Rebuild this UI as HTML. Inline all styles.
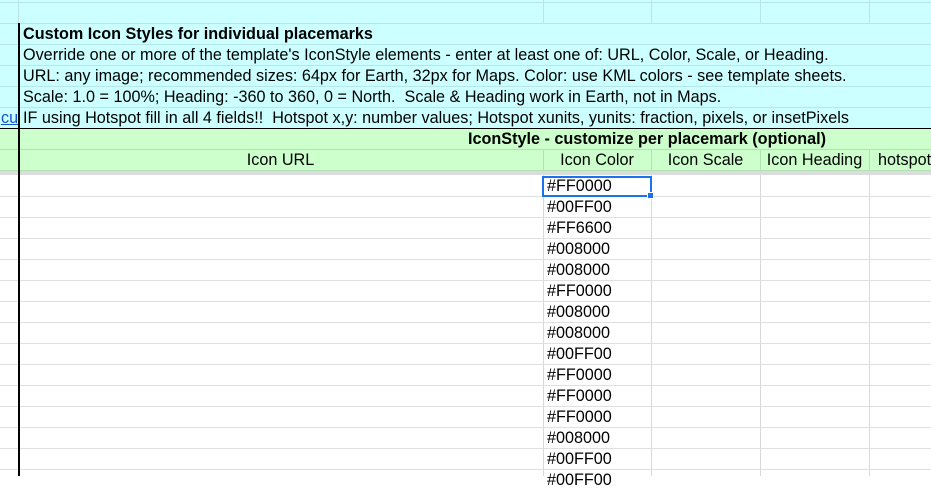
<!DOCTYPE html>
<html><head><style>
*{margin:0;padding:0;box-sizing:border-box}
body{width:931px;height:476px;overflow:hidden;background:#fff;font-family:"Liberation Sans",Arial,sans-serif;font-size:16.2px;color:#000;position:relative}
.a{position:absolute}
.h{position:absolute;left:0;width:931px;height:1px}
.v{position:absolute;width:1px}
.t{position:absolute;white-space:nowrap;line-height:21px}
</style></head><body>
<div class="a" style="left:0;top:0;width:931px;height:171px;background:#ccffff"></div>
<div class="a" style="left:0;top:128px;width:931px;height:43px;background:#ccffcc"></div>
<div class="a" style="left:0;top:171px;width:931px;height:4px;background:#dadce0"></div>
<div class="h" style="top:2px;background:#b8e6e6"></div>
<div class="h" style="top:23px;background:#b8e6e6"></div>
<div class="h" style="top:44px;background:#b8e6e6"></div>
<div class="h" style="top:65px;background:#b8e6e6"></div>
<div class="h" style="top:86px;background:#b8e6e6"></div>
<div class="h" style="top:107px;background:#b8e6e6"></div>
<div class="h" style="top:128px;background:#000"></div>
<div class="h" style="top:149px;background:#b4e0b4"></div>
<div class="h" style="top:170px;background:#b4e0b4"></div>
<div class="v" style="left:18px;top:0;height:23px;background:#b8e6e6"></div>
<div class="v" style="left:543px;top:0;height:23px;background:#b8e6e6"></div>
<div class="v" style="left:651px;top:0;height:23px;background:#b8e6e6"></div>
<div class="v" style="left:760px;top:0;height:23px;background:#b8e6e6"></div>
<div class="v" style="left:869px;top:0;height:23px;background:#b8e6e6"></div>
<div class="v" style="left:543px;top:149px;height:22px;background:#b4e0b4"></div>
<div class="v" style="left:651px;top:149px;height:22px;background:#b4e0b4"></div>
<div class="v" style="left:760px;top:149px;height:22px;background:#b4e0b4"></div>
<div class="v" style="left:869px;top:149px;height:22px;background:#b4e0b4"></div>
<div class="v" style="left:543px;top:175px;height:301px;background:#d9d9d9"></div>
<div class="v" style="left:651px;top:175px;height:301px;background:#d9d9d9"></div>
<div class="v" style="left:760px;top:175px;height:301px;background:#d9d9d9"></div>
<div class="v" style="left:869px;top:175px;height:301px;background:#d9d9d9"></div>
<div class="h" style="top:196px;background:#e0e0e0"></div>
<div class="h" style="top:217px;background:#e0e0e0"></div>
<div class="h" style="top:238px;background:#e0e0e0"></div>
<div class="h" style="top:259px;background:#e0e0e0"></div>
<div class="h" style="top:280px;background:#e0e0e0"></div>
<div class="h" style="top:301px;background:#e0e0e0"></div>
<div class="h" style="top:322px;background:#e0e0e0"></div>
<div class="h" style="top:343px;background:#e0e0e0"></div>
<div class="h" style="top:364px;background:#e0e0e0"></div>
<div class="h" style="top:385px;background:#e0e0e0"></div>
<div class="h" style="top:406px;background:#e0e0e0"></div>
<div class="h" style="top:427px;background:#e0e0e0"></div>
<div class="h" style="top:448px;background:#e0e0e0"></div>
<div class="h" style="top:469px;background:#e0e0e0"></div>
<div class="v" style="left:18px;top:23px;height:453px;background:#000;width:2px"></div>
<div class="t" style="left:23px;top:24px;font-weight:bold">Custom Icon Styles for individual placemarks</div>
<div class="t" style="left:23px;top:45px">Override one or more of the template's IconStyle elements - enter at least one of: URL, Color, Scale, or Heading.</div>
<div class="t" style="left:23px;top:66px">URL: any image; recommended sizes: 64px for Earth, 32px for Maps. Color: use KML colors - see template sheets.</div>
<div class="t" style="left:23px;top:87px">Scale: 1.0 = 100%; Heading: -360 to 360, 0 = North.&nbsp; Scale &amp; Heading work in Earth, not in Maps.</div>
<div class="a" style="left:0;top:108px;width:18px;height:20px;overflow:hidden"><div class="t" style="left:1px;top:0;color:#1155cc;text-decoration:underline">cu</div></div>
<div class="t" style="left:23px;top:108px">IF using Hotspot fill in all 4 fields!!&nbsp; Hotspot x,y: number values; Hotspot xunits, yunits: fraction, pixels, or insetPixels</div>
<div class="t" style="left:468px;top:129px;font-weight:bold">IconStyle - customize per placemark (optional)</div>
<div class="t" style="left:18px;width:525px;text-align:center;top:150px">Icon URL</div>
<div class="t" style="left:543px;width:108px;text-align:center;top:150px">Icon Color</div>
<div class="t" style="left:651px;width:109px;text-align:center;top:150px">Icon Scale</div>
<div class="t" style="left:760px;width:109px;text-align:center;top:150px">Icon Heading</div>
<div class="t" style="left:878px;top:150px">hotspot</div>
<div class="t" style="left:547px;top:176px">#FF0000</div>
<div class="t" style="left:547px;top:197px">#00FF00</div>
<div class="t" style="left:547px;top:218px">#FF6600</div>
<div class="t" style="left:547px;top:239px">#008000</div>
<div class="t" style="left:547px;top:260px">#008000</div>
<div class="t" style="left:547px;top:281px">#FF0000</div>
<div class="t" style="left:547px;top:302px">#008000</div>
<div class="t" style="left:547px;top:323px">#008000</div>
<div class="t" style="left:547px;top:344px">#00FF00</div>
<div class="t" style="left:547px;top:365px">#FF0000</div>
<div class="t" style="left:547px;top:386px">#FF0000</div>
<div class="t" style="left:547px;top:407px">#FF0000</div>
<div class="t" style="left:547px;top:428px">#008000</div>
<div class="t" style="left:547px;top:449px">#00FF00</div>
<div class="t" style="left:547px;top:470px">#00FF00</div>
<div class="a" style="left:542px;top:176px;width:110px;height:21px;border:2px solid #1a73e8"></div>
<div class="a" style="left:647px;top:192px;width:7px;height:7px;background:#1a73e8;border:1px solid #fff"></div>
</body></html>
